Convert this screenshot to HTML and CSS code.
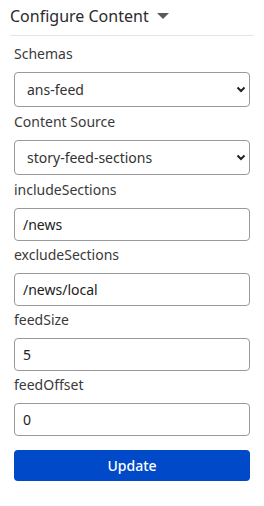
FILE: index.html
```html
<!DOCTYPE html>
<html>
<head>
    <meta charset="utf-8">
    <title>Configure Content</title>
    <link rel="stylesheet" href="styles.css">
</head>
<body>
    <div class="panel">
        <div class="panel-header">
            <span class="panel-title">Configure Content</span>
            <span class="caret"></span>
        </div>
        <div class="fields">
            <div class="field field-select">
                <label class="field-label">Schemas</label>
                <div class="select-wrap">
                    <select class="select">
                        <option>ans-feed</option>
                    </select>
                    <svg class="chevron" width="10" height="7" viewBox="0 0 10 7"><path d="M1.5 1.5 L5 5 L8.5 1.5" fill="none" stroke="#222" stroke-width="2"/></svg>
                </div>
            </div>
            <div class="field field-select">
                <label class="field-label">Content Source</label>
                <div class="select-wrap">
                    <select class="select">
                        <option>story-feed-sections</option>
                    </select>
                    <svg class="chevron" width="10" height="7" viewBox="0 0 10 7"><path d="M1.5 1.5 L5 5 L8.5 1.5" fill="none" stroke="#222" stroke-width="2"/></svg>
                </div>
            </div>
            <div class="field">
                <label class="field-label">includeSections</label>
                <input class="input" type="text" value="/news">
            </div>
            <div class="field">
                <label class="field-label">excludeSections</label>
                <input class="input" type="text" value="/news/local">
            </div>
            <div class="field">
                <label class="field-label">feedSize</label>
                <input class="input" type="text" value="5">
            </div>
            <div class="field">
                <label class="field-label">feedOffset</label>
                <input class="input" type="text" value="0">
            </div>
            <button class="update-btn">Update</button>
        </div>
    </div>
</body>
</html>
```

FILE: styles.css
```css
body {
    margin: 0;
    font-family: 'Noto Sans', sans-serif;
    font-size: 14px;
    color: #3a3a3a;
    background: #ffffff;
}

.panel {
    padding: 0 10px;
}

.panel-header {
    display: flex;
    align-items: center;
    height: 35px;
    border-bottom: 1px solid #e3e6e8;
}

.panel-title {
    font-size: 16px;
    color: #2b2b2b;
    margin-top: -3px;
}

/* little down triangle next to the title */
.caret {
    width: 0;
    height: 0;
    margin-left: 8px;
    margin-top: -4px;
    border-left: 6px solid transparent;
    border-right: 6px solid transparent;
    border-top: 6px solid #5a5a5a;
}

.fields {
    padding: 0 4px;
}

.field {
    margin-top: 8px;
}

.field + .field {
    margin-top: 4px;
}

.field-select {
    padding-bottom: 1px;
}

.field-label {
    display: block;
    line-height: 20px;
    margin-bottom: 8px;
}

.select-wrap {
    position: relative;
}

.select {
    appearance: none;
    -webkit-appearance: none;
    width: 100%;
    height: 35px;
    box-sizing: border-box;
    border: 1px solid #999;
    border-radius: 4px;
    background: #fff;
    padding: 0 12px;
    font-family: inherit;
    font-size: 14px;
    color: #333;
}

.chevron {
    position: absolute;
    right: 4px;
    top: 14px;
    pointer-events: none;
}

.input {
    display: block;
    width: 100%;
    height: 33px;
    box-sizing: border-box;
    border: 1px solid #999;
    border-radius: 4px;
    padding: 0 8px;
    font-family: inherit;
    font-size: 14px;
    color: #222;
}

.update-btn {
    display: block;
    width: 100%;
    height: 31px;
    margin-top: 14px;
    border: none;
    border-radius: 4px;
    background: #0049c8;
    color: #fff;
    font-family: inherit;
    font-size: 14px;
    font-weight: 500;
    cursor: pointer;
}
```
